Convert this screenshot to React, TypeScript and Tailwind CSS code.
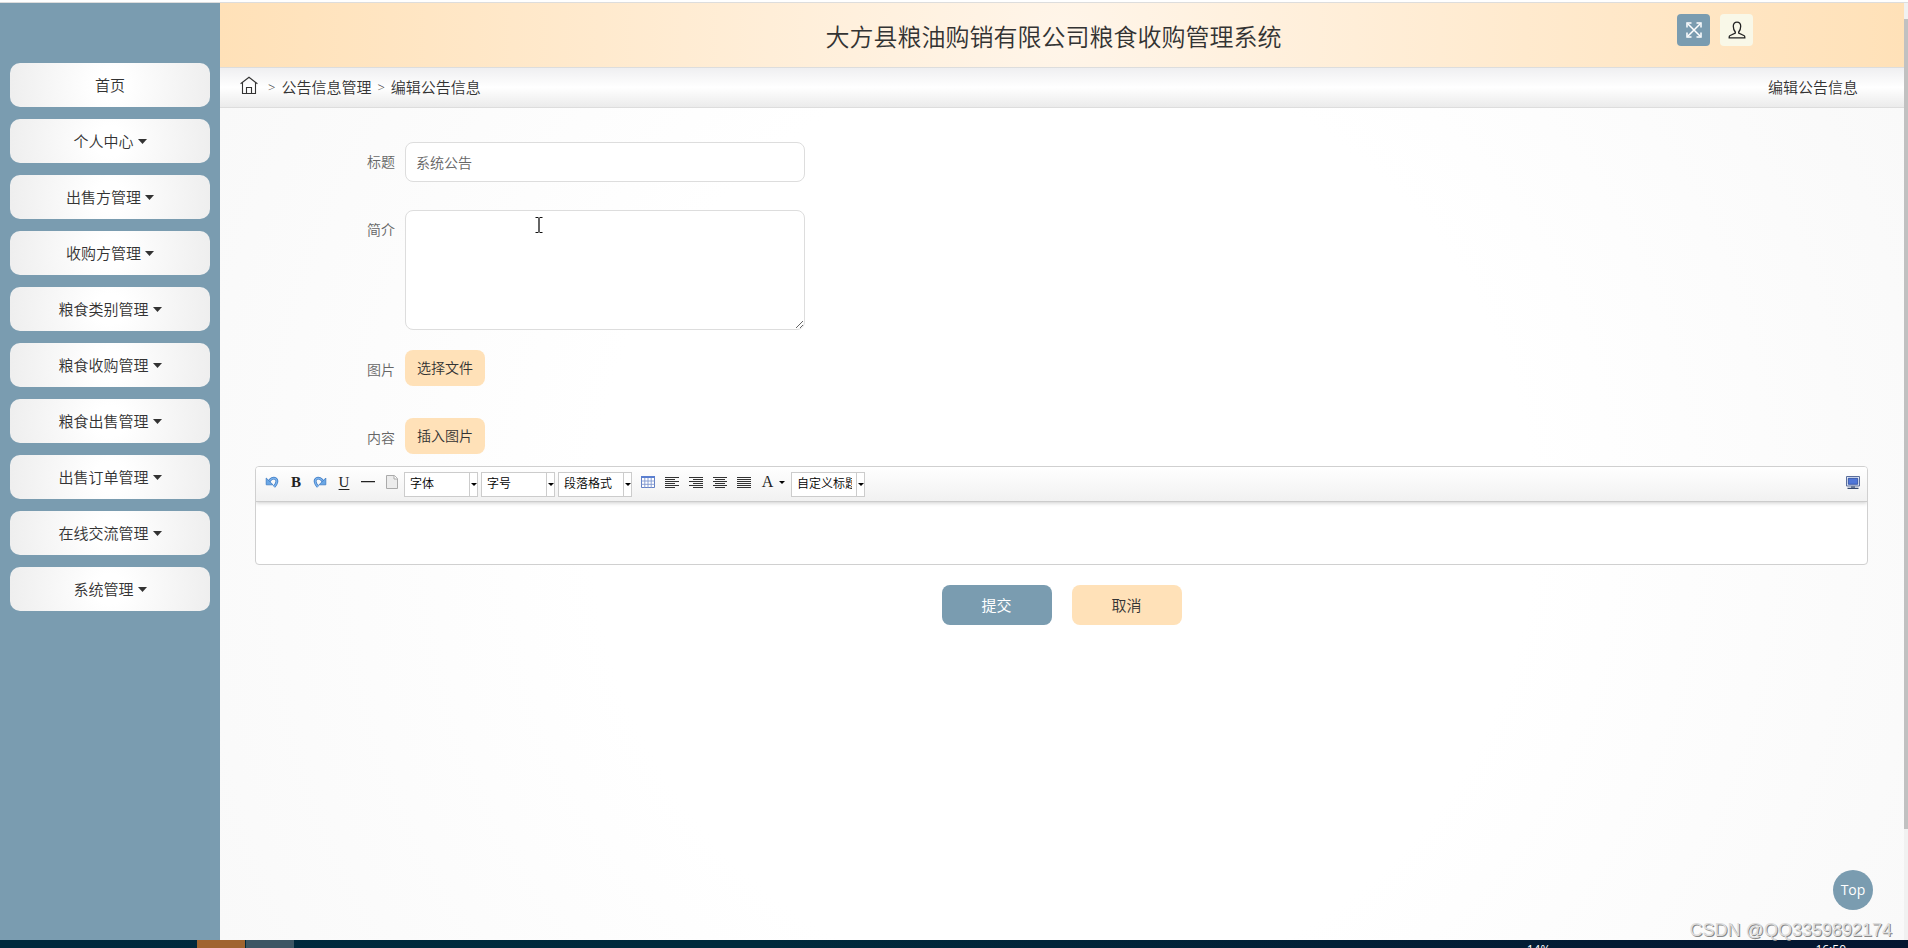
import React from "react";

const FONT = "font-['Open_Sans','Noto_Sans_CJK_SC',sans-serif]";

const menu = [
  "首页",
  "个人中心",
  "出售方管理",
  "收购方管理",
  "粮食类别管理",
  "粮食收购管理",
  "粮食出售管理",
  "出售订单管理",
  "在线交流管理",
  "系统管理",
];

function Caret({ className }: { className: string }) {
  return (
    <svg viewBox="0 0 8 4" className={className} preserveAspectRatio="none" aria-hidden="true">
      <path d="M0 0h8L4 4z" fill="currentColor" />
    </svg>
  );
}

function Sidebar() {
  return (
    <nav className="flex w-[220px] shrink-0 flex-col gap-3 bg-[#7a9cb0] px-[10px] pt-[60px]">
      {menu.map((item, i) => (
        <button
          key={item}
          type="button"
          className="flex h-11 items-center justify-center gap-1 rounded-[10px] bg-[radial-gradient(circle,#fff_0%,#fff_15%,#eee_100%)] text-[15px] text-[#333]"
        >
          <span>{item}</span>
          {i > 0 && <Caret className="h-[5px] w-[9px]" />}
        </button>
      ))}
    </nav>
  );
}

function Header() {
  return (
    <header className="grid h-[65px] grid-cols-[1fr_auto_1fr] border-b border-[#ddd] bg-[radial-gradient(circle,#fff5e9_0%,#ffe1b8_100%)] pr-[17px]">
      <span />
      <h1 className="self-center pt-1 text-2xl text-[#333]">
        大方县粮油购销有限公司粮食收购管理系统
      </h1>
      <div className="mt-[11px] mr-[134px] flex items-start justify-end gap-[10px]">
        <button
          type="button"
          aria-label="全屏"
          className="flex h-8 w-[33px] items-center justify-center rounded bg-[#7a9cb0] text-white"
        >
          <svg viewBox="0 0 16 16" className="size-4" fill="none" stroke="currentColor" strokeWidth="1.500">
            <path d="M2 2l12 12M14 2L2 14" />
            <path d="M1 5.500V1h4.500M10.500 1H15v4.500M15 10.500V15h-4.500M5.500 15H1v-4.500" />
          </svg>
        </button>
        <button
          type="button"
          aria-label="个人信息"
          className="flex h-8 w-[33px] items-center justify-center rounded bg-[#f9f8e8] text-[#222]"
        >
          <svg viewBox="0 0 18 18" className="size-[18px]" fill="none" stroke="currentColor" strokeWidth="1.300">
            <path d="M7.300 11C6 9.500 5.300 7.600 5.300 5.300 5.300 2.700 6.700 1.100 9 1.100s3.700 1.600 3.700 4.200c0 2.300-.7 4.200-2 5.700v1.200l5.100 2.300c.7.300 1 .8 1 1.500v.9H1.200V16c0-.7.300-1.200 1-1.500l5.100-2.300z" />
          </svg>
        </button>
      </div>
    </header>
  );
}

function Breadcrumb() {
  return (
    <div className="flex h-10 items-center justify-between border-b border-[#ddd] bg-[linear-gradient(#efeff1_0%,#fff_50%,#ebebeb_100%)] pr-[46px] pl-5 text-[15px] text-[#333]">
      <div className="flex items-center gap-[6px]">
        <a href="#home" aria-label="首页" className="mr-1 mb-1">
          <svg viewBox="0 0 18 19" className="h-[19px] w-[18px]" fill="none" stroke="currentColor" strokeWidth="1.100">
            <path d="M.6 7.800L9 1.200l8.400 6.600M2.500 6.500v11h13v-11M6.500 17.500v-6h5v6" />
          </svg>
        </a>
        <span className="text-[13px]">&gt;</span>
        <a href="#notice">公告信息管理</a>
        <span className="text-[13px]">&gt;</span>
        <span>编辑公告信息</span>
      </div>
      <span>编辑公告信息</span>
    </div>
  );
}

const labelClass = "w-[140px] shrink-0 text-right text-sm leading-10 text-[#666]";

function EditorSelect({ label }: { label: string }) {
  return (
    <div className="relative h-[25px] w-[74px] border border-[#ccc] bg-white">
      <select
        aria-label={label}
        className="block h-full w-[65px] appearance-none overflow-hidden border-r border-[#ccc] pr-1 pl-[5px] text-xs text-black outline-none"
      >
        <option>{label}</option>
      </select>
      <Caret className="pointer-events-none absolute top-[10px] right-0 h-[3px] w-[6px]" />
    </div>
  );
}

function Tool({ label, children }: { label: string; children: React.ReactNode }) {
  return (
    <button type="button" aria-label={label} className="flex h-5 w-6 items-center justify-center text-black">
      {children}
    </button>
  );
}

function Lines({ rows }: { rows: [number, number][] }) {
  return (
    <svg viewBox="0 0 14 11" className="h-[11px] w-[14px]" shapeRendering="crispEdges" aria-hidden="true">
      {rows.map(([x, w], i) => (
        <rect key={i} x={x} y={i * 2} width={w} height="1" fill="#333" />
      ))}
    </svg>
  );
}

function UndoArrow() {
  return (
    <>
      <path d="M4 5.500C5.500 2.800 8.500 1.300 10.500 2.600c2.400 1.600 1.600 5-1.500 8.200" fill="none" stroke="#3f7cc4" strokeWidth="2.800" />
      <path d="M4 5.500C5.500 2.800 8.500 1.300 10.500 2.600c2.400 1.600 1.600 5-1.500 8.200" fill="none" stroke="#7db4ee" strokeWidth="1.300" />
      <path d="M1.200 2v6.800H8z" fill="#6aa7e6" stroke="#3f7cc4" strokeWidth=".8" />
    </>
  );
}

function Editor() {
  return (
    <div className="overflow-hidden rounded border border-[#d0d0d0] bg-white">
      <div className="flex h-[35px] items-center border-b border-[#ccc] bg-[linear-gradient(#fff,#f1f1f1)] pr-[2px] pl-1 shadow-[0_1px_4px_rgba(0,0,0,0.2)]">
        <div className="flex items-center pb-1">
          <Tool label="撤销">
            <svg viewBox="0 0 14 12" className="h-3 w-[14px]"><UndoArrow /></svg>
          </Tool>
          <Tool label="加粗">
            <span className="font-['Liberation_Serif',serif] text-[15px] font-bold text-[#222]">B</span>
          </Tool>
          <Tool label="重做">
            <svg viewBox="0 0 14 12" className="h-3 w-[14px]"><g transform="matrix(-1 0 0 1 14 0)"><UndoArrow /></g></svg>
          </Tool>
          <Tool label="下划线">
            <span className="font-['Liberation_Serif',serif] text-[15px] text-[#222] underline underline-offset-2">U</span>
          </Tool>
          <Tool label="分隔线">
            <svg viewBox="0 0 14 2" className="h-[2px] w-[14px]"><path d="M0 .6h14" stroke="#222" strokeWidth="1.200" /></svg>
          </Tool>
          <Tool label="清空文档">
            <svg viewBox="0 0 12 14" className="h-[14px] w-3"><path d="M.5.500h8l3 3v10H.5z" fill="#ececec" stroke="#aaa" /><path d="M8 .5V4h3.500" fill="#fff" stroke="#aaa" /></svg>
          </Tool>
        </div>
        <div className="flex items-center gap-[3px] pr-1">
          <EditorSelect label="字体" />
          <EditorSelect label="字号" />
          <EditorSelect label="段落格式" />
        </div>
        <div className="flex items-center pb-1">
          <Tool label="插入表格">
            <svg viewBox="0 0 14 12" className="h-3 w-[14px]">
              <path d="M.5.500h13v11H.5z" fill="#fff" stroke="#6480c4" />
              <path d="M0 0h14v2H0z" fill="#5b7fd0" />
              <path d="M.5 5h13M.5 8.300h13M3.800 2v10M7 2v10M10.200 2v10" stroke="#7f97d0" strokeWidth=".9" />
            </svg>
          </Tool>
          <Tool label="左对齐"><Lines rows={[[0, 14], [0, 10], [0, 14], [0, 10], [0, 14], [0, 10]]} /></Tool>
          <Tool label="右对齐"><Lines rows={[[0, 14], [4, 10], [0, 14], [4, 10], [0, 14], [4, 10]]} /></Tool>
          <Tool label="居中对齐"><Lines rows={[[0, 14], [2, 10], [0, 14], [2, 10], [0, 14], [2, 10]]} /></Tool>
          <Tool label="两端对齐"><Lines rows={[[0, 14], [0, 14], [0, 14], [0, 14], [0, 14], [0, 14]]} /></Tool>
          <button type="button" aria-label="字体颜色" className="flex h-5 w-[35px] items-center justify-center gap-[6px] text-black">
            <span className="font-['Liberation_Serif',serif] text-base text-[#222]">A</span>
            <Caret className="h-[3px] w-[6px]" />
          </button>
        </div>
        <EditorSelect label="自定义标题" />
        <div className="ml-auto pb-1">
          <Tool label="全屏编辑">
            <svg viewBox="0 0 14 13" className="h-[13px] w-[14px]">
              <path d="M.5.500h13v9.500H.5z" fill="#e4eaf6" stroke="#5a6e9c" />
              <path d="M2.300 2.300h9.400v6H2.300z" fill="#4f76d8" stroke="#27479b" strokeWidth=".8" />
              <path d="M5 10.500h4v1H5zM1.500 11.800h11V13h-11z" fill="#34486f" />
            </svg>
          </Tool>
        </div>
      </div>
      <div role="textbox" aria-label="内容" contentEditable suppressContentEditableWarning className="h-[62px] outline-none" />
    </div>
  );
}

function NoticeForm() {
  return (
    <form className="pt-[34px] pr-9 pl-[35px]" onSubmit={(e) => e.preventDefault()}>
      <div className="flex gap-[10px]">
        <label htmlFor="title" className={labelClass}>标题</label>
        <input
          id="title"
          type="text"
          defaultValue="系统公告"
          className="h-10 w-[400px] rounded-lg border border-[#ddd] bg-white px-[10px] text-sm text-[#666] outline-none"
        />
      </div>
      <div className="mt-7 flex gap-[10px]">
        <label htmlFor="intro" className={labelClass}>简介</label>
        <div className="relative">
          <textarea
            id="intro"
            className="block h-[120px] w-[400px] rounded-lg border border-[#ddd] bg-white p-[10px] text-sm text-[#666] outline-none"
          />
          <svg viewBox="0 0 8 18" className="pointer-events-none absolute top-[6px] left-[130px] h-[18px] w-2" fill="none" stroke="#111">
            <path d="M.5 1.500H3.500M4.500 1.500h3M.5 16.500H3.500M4.500 16.500h3" />
            <path d="M4 2v14" strokeWidth="1.300" />
          </svg>
        </div>
      </div>
      <div className="mt-5 flex gap-[10px]">
        <span className={labelClass}>图片</span>
        <button type="button" className="h-9 w-20 rounded-lg bg-[#ffe1b8] text-sm text-[#333]">选择文件</button>
      </div>
      <div className="mt-7 flex gap-[10px]">
        <span className={labelClass}>内容</span>
        <button type="button" className="h-9 w-20 rounded-lg bg-[#ffe1b8] text-sm text-[#333]">插入图片</button>
      </div>
      <div className="mt-2">
        <Editor />
      </div>
      <div className="mt-5 flex justify-center gap-5 text-[15px]">
        <button type="submit" className="h-10 w-[110px] rounded-lg bg-[#7a9cb0] font-normal text-white">提交</button>
        <button type="button" className="h-10 w-[110px] rounded-lg bg-[#ffe1b8] text-[#333]">取消</button>
      </div>
    </form>
  );
}

function Taskbar() {
  return (
    <footer className="flex h-2 shrink-0 overflow-hidden bg-[linear-gradient(90deg,#00293d,#002a3c_40%,#041530)] text-xs leading-4 font-normal text-white">
      <div className="ml-[197px] w-12 bg-[#a0642f]" />
      <div className="ml-px w-12 bg-[#3d5664]" />
      <span className="mt-0.5 mr-[265px] ml-auto">14%</span>
      <span className="mt-0.5 mr-[62px]">16:50</span>
    </footer>
  );
}

export default function App() {
  return (
    <div className={`relative flex min-h-screen flex-col bg-white font-[350] ${FONT}`}>
      <div className="h-[3px] border-b border-[#ddd]" />
      <div className="flex flex-1">
        <Sidebar />
        <main className="flex min-w-0 flex-1 flex-col">
          <Header />
          <Breadcrumb />
          <div className="flex-1 bg-[radial-gradient(circle,#fff_0%,#fff_50%,#f9f9f9_100%)]">
            <NoticeForm />
          </div>
        </main>
        <div className="w-1 bg-[#f1f1f1] pt-4">
          <div className="h-[88%] bg-[#c1c1c1]" />
        </div>
      </div>
      <Taskbar />
      <a
        href="#top"
        className="absolute right-[35px] bottom-[38px] flex size-10 items-center justify-center rounded-full bg-[#7a9cb0] text-sm font-normal text-white"
      >
        Top
      </a>
      <span className="absolute right-4 bottom-2 font-['Liberation_Sans',sans-serif] text-lg leading-5 font-normal text-[#ddd] [text-shadow:1px_1px_0_#888]">
        CSDN @QQ3359892174
      </span>
    </div>
  );
}
